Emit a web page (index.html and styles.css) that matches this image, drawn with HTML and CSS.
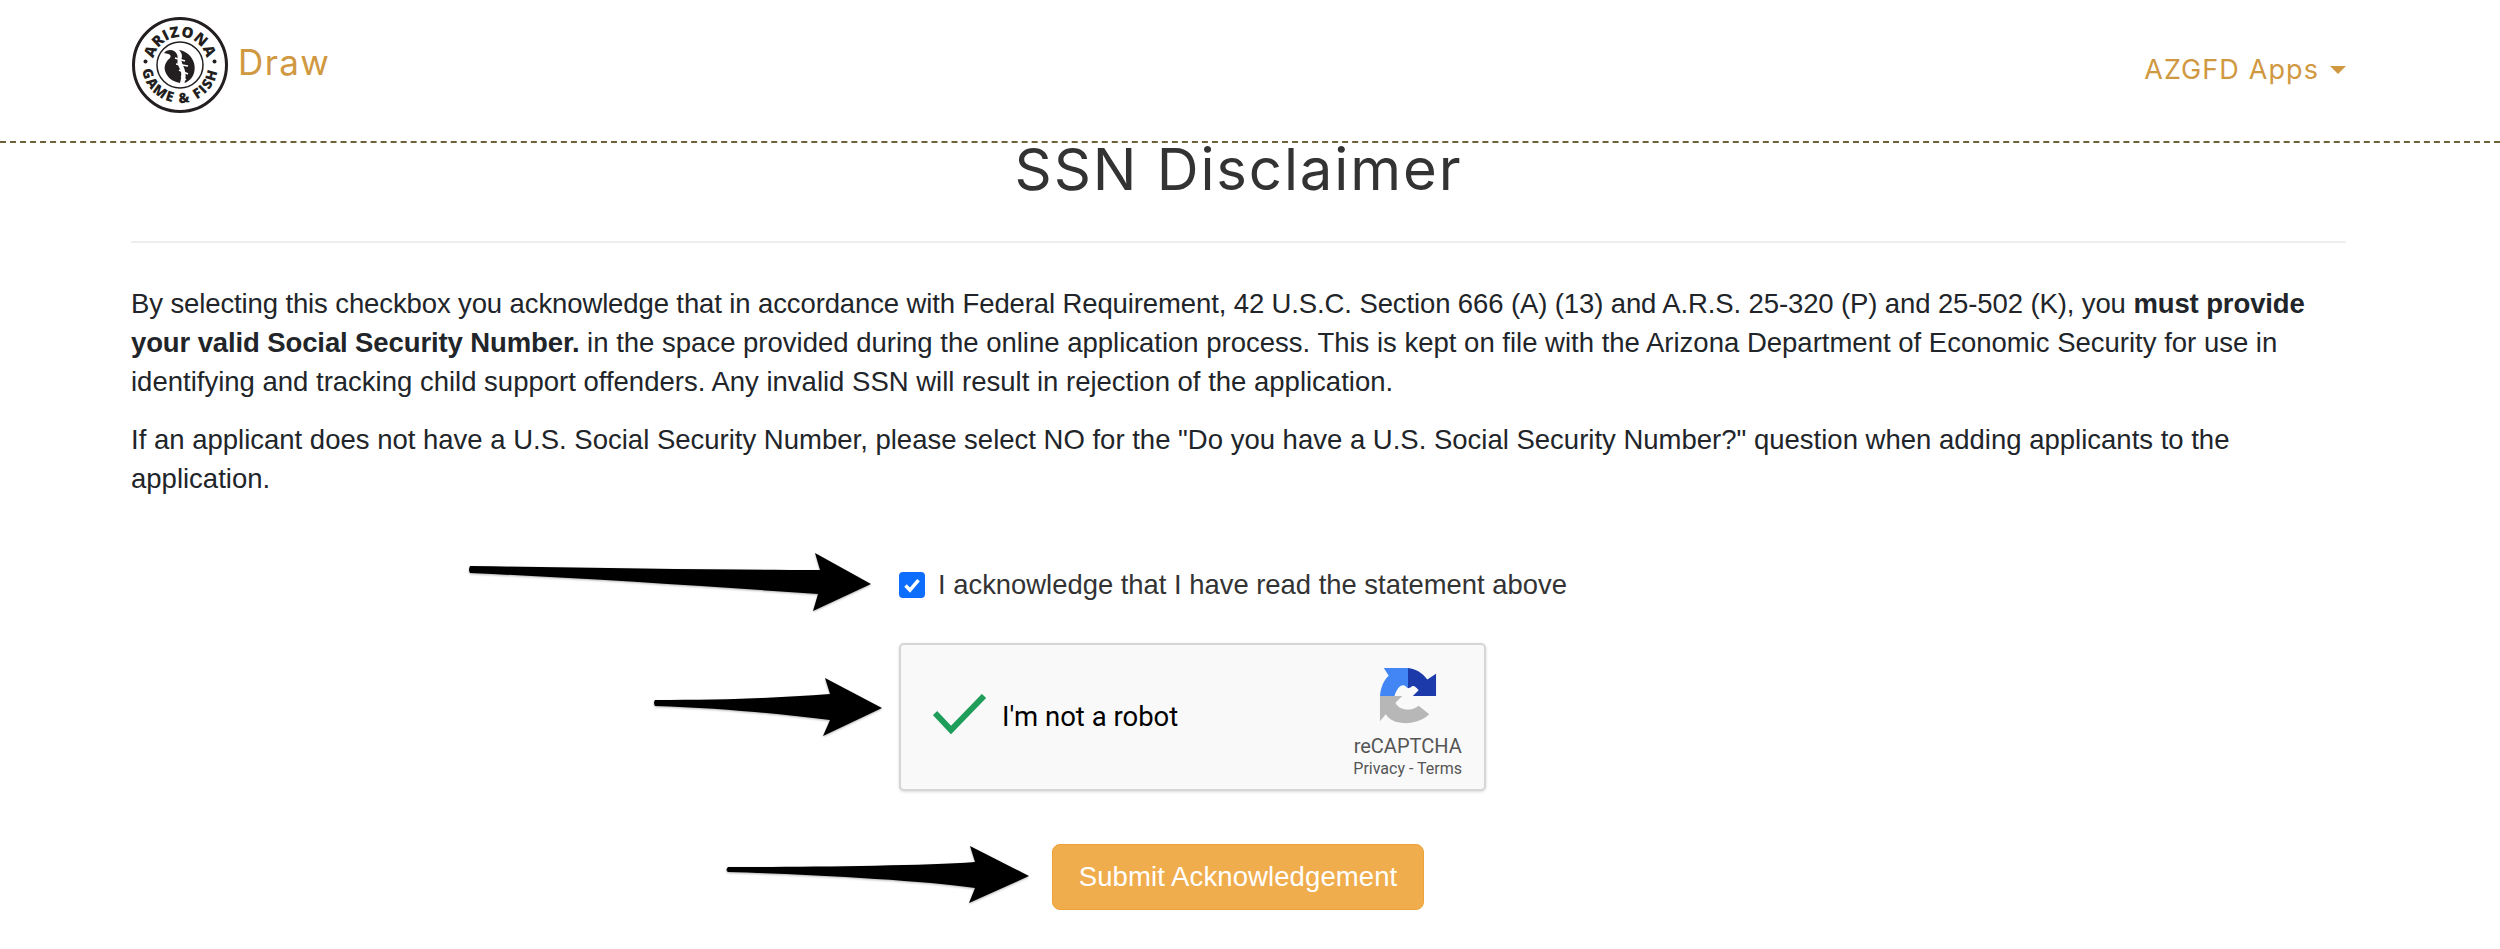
FILE: index.html
```html
<!DOCTYPE html>
<html lang="en">
<head>
<meta charset="utf-8">
<title>SSN Disclaimer</title>
<link rel="stylesheet" href="styles.css">
</head>
<body>
<header class="site-header">
  <a class="brand" href="#">
    <svg class="logo" viewBox="0 0 96 96" aria-label="Arizona Game and Fish">
      <defs>
        <path id="arc-top" d="M27.300 64.300 A27 27 0 1 1 68.700 64.300"/>
        <path id="arc-bottom" d="M15.100 29 A38 38 0 1 0 80.900 29"/>
      </defs>
      <circle cx="48" cy="48" r="46.500" class="logo-ring"/>
      <text class="logo-text"><textPath href="#arc-top" startOffset="50%" text-anchor="middle">ARIZONA</textPath></text>
      <text class="logo-text logo-text-small"><textPath href="#arc-bottom" startOffset="50%" text-anchor="middle">GAME &amp; FISH</textPath></text>
      <circle cx="13.500" cy="44.500" r="2"/>
      <circle cx="82.500" cy="44.500" r="2"/>
      <circle cx="48" cy="48" r="23" class="logo-inner"/>
      <path d="M32 36c2-3 7-4 10-2 4 2.500 4 7 3.500 10-.5 3 1 5 2.500 8 2 4.500 1.500 9 0 14-5-1-10-3-13-8-3-5-3-9-.5-13 1-2 3.500-3.500 4-5 .5-1.500-.5-2.500-2-3-1.500-.5-3-.5-4.500-1z"/>
      <path d="M47 33c7 1 13 6 15 13 1.500 6 .5 11-2.500 15-2 2.500-4.500 4-7 5 1.500-5 1.500-9 0-14-1-3-2.500-5-3-8-.5-2 .5-3 .5-5 0-2.500-1.500-4.500-3-6z"/>
      <path class="logo-feather" d="M43 41l10 3M44 47l12 2M47 53l9 4M49 59l5 4"/>
    </svg>
    <span class="brand-name">Draw</span>
  </a>
  <a class="apps-menu" href="#">AZGFD Apps<span class="caret"></span></a>
</header>

<main class="content">
  <h1 class="page-title">SSN Disclaimer</h1>
  <p class="copy"><span class="tight">By selecting this checkbox you acknowledge that in accordance with Federal Requirement, 42 U.S.C. Section 666 (A) (13) and A.R.S. 25-320 (P) and 25-502 (K), you</span> <strong class="tight">must provide your valid Social Security Number.</strong> in the space provided during the online application process. This is kept on file with the Arizona Department of Economic Security for use in identifying and tracking child support offenders. Any invalid SSN will result in rejection of the application.</p>
  <p class="copy">If an applicant does not have a U.S. Social Security Number, please select NO for the "Do you have a U.S. Social Security Number?" question when adding applicants to the application.</p>

  <form class="ack-form">
    <label class="ack-row">
      <span class="check-box">
        <svg viewBox="0 0 26 26"><path d="M6.500 13.500l4.500 4.700 8.500-10"/></svg>
      </span>
      I acknowledge that I have read the statement above
    </label>

    <div class="captcha">
      <svg class="captcha-check" viewBox="0 0 54 40"><path d="M2 19l16 17L51 2"/></svg>
      <span class="captcha-label">I'm not a robot</span>
      <div class="captcha-brand">
        <svg class="captcha-logo" viewBox="0 0 60 60">
          <path fill="#4285f4" d="M1 30C2 20 5 14 10 9L5 1H30V22L26 19C22 18 18 23 16 30Z"/>
          <path fill="#1c3aa9" d="M30 1C38 2 45 6 50 13L59 7V30H35L41 24C38 20 35 18 33 21L30 22Z"/>
          <path fill="#b7b7b7" d="M1 30H24L17 37C20 44 32 47 41 40L52 49C44 57 30 60 18 57 12 55 9 52 7 49L1 56Z"/>
        </svg>
        <span class="captcha-name">reCAPTCHA</span>
        <span class="captcha-links">Privacy - Terms</span>
      </div>
    </div>

    <button class="submit-btn" type="button">Submit Acknowledgement</button>
  </form>
</main>

<svg class="annotations" viewBox="0 0 2500 949" aria-hidden="true">
  <path d="M470 566 C600 568 720 570 820 570 L815 553 L871 584 L813 611 L818 594 C700 586 580 578 470 573 Q468 570 470 566Z"/>
  <path d="M655 700 C720 700 780 698 830 694 L825 678 L882 708 L823 736 L830 720 C780 714 720 708 655 706 Q653 703 655 700Z"/>
  <path d="M728 867 C800 867 920 866 975 862 L970 846 L1029 876 L969 903 L975 888 C920 880 800 874 728 872 Q725 870 728 867Z"/>
</svg>
</body>
</html>
```
FILE: styles.css
```css
* { box-sizing: border-box; }

html, body { margin: 0; padding: 0; }

body {
  position: relative;
  height: 949px;
  overflow: hidden;
  background: #fff;
  color: #333;
  font-family: "Liberation Sans", Arial, sans-serif;
  font-size: 27.500px;
  line-height: 39px;
}

.site-header {
  display: flex;
  justify-content: space-between;
  height: 143px;
  padding: 17px 154px 0 132px;
  border-bottom: 2px dashed #6f6238;
}

.brand {
  display: flex;
  align-items: flex-start;
  gap: 10px;
  text-decoration: none;
}

.logo { width: 96px; height: 96px; fill: #231f20; }
.logo-ring { fill: #fff; stroke: #231f20; stroke-width: 3; }
.logo-inner { fill: none; stroke: #231f20; stroke-width: 1.500; }
.logo-feather { fill: none; stroke: #fff; stroke-width: 1.500; }

.logo-text {
  font-family: "Open Sans", sans-serif;
  font-size: 15px;
  font-weight: 800;
  letter-spacing: .4px;
}

.logo-text-small { font-size: 14px; letter-spacing: 1.600px; }

.brand-name {
  margin-top: 24px;
  color: #d09840;
  font-family: Inter, sans-serif;
  font-size: 35px;
  line-height: 42px;
  letter-spacing: 1.400px;
}

.apps-menu {
  display: flex;
  align-items: center;
  height: 34px;
  margin-top: 36px;
  color: #d09840;
  font-family: Inter, sans-serif;
  font-size: 27px;
  line-height: 34px;
  letter-spacing: 1.100px;
  text-decoration: none;
}

.caret {
  width: 0;
  height: 0;
  margin-left: 11px;
  border-top: 8px solid #d09840;
  border-left: 8px solid transparent;
  border-right: 8px solid transparent;
}

.content { padding: 0 154px 0 131px; }

.page-title {
  height: 100px;
  margin: 0 0 41px;
  border-bottom: 2px solid #eee;
  color: #333;
  font-family: Inter, sans-serif;
  font-size: 58px;
  font-weight: 400;
  line-height: 52px;
  letter-spacing: 1.900px;
  text-align: center;
}

.copy { margin: 0 0 19px; color: #212529; }
.tight { letter-spacing: -.115px; }

.ack-form {
  display: flex;
  flex-direction: column;
  align-items: flex-start;
  margin-top: 67px;
  padding-left: 768px;
}

.ack-row {
  display: flex;
  align-items: center;
  gap: 13px;
  height: 39px;
  font-size: 27.400px;
}

.check-box {
  display: block;
  width: 26px;
  height: 26px;
  background: #0d6efd;
  border-radius: 4px;
}

.check-box svg { display: block; fill: none; stroke: #fff; stroke-width: 3.500; }

.captcha {
  display: flex;
  align-items: center;
  width: 587px;
  height: 148px;
  margin-top: 39px;
  padding: 0 22px 0 32px;
  background: #f9f9f9;
  border: 2px solid #d6d6d6;
  border-radius: 5px;
  box-shadow: 0 1px 3px rgba(0, 0, 0, .15);
}

.captcha-check {
  width: 54px;
  height: 40px;
  margin-bottom: 6px;
  fill: none;
  stroke: #1e9e5a;
  stroke-width: 6;
}

.captcha-label {
  margin-left: 15px;
  color: #000;
  font-family: Roboto, sans-serif;
  font-size: 27.500px;
  line-height: 32px;
}

.captcha-brand {
  display: flex;
  flex-direction: column;
  align-items: center;
  align-self: flex-start;
  margin-left: auto;
  padding-top: 22px;
  color: #555;
  font-family: Roboto, sans-serif;
}

.captcha-logo { width: 58px; height: 58px; margin-bottom: 9px; }
.captcha-name { font-size: 20px; line-height: 24px; }
.captcha-links { font-size: 16px; line-height: 22px; }

.submit-btn {
  width: 372px;
  height: 66px;
  margin: 53px 0 0 153px;
  padding: 0;
  background: #f0ad4e;
  border: 1px solid #eea236;
  border-radius: 8px;
  color: #fff;
  font-family: "Liberation Sans", Arial, sans-serif;
  font-size: 27.500px;
  letter-spacing: .1px;
  white-space: nowrap;
}

.annotations {
  position: absolute;
  top: 0;
  left: 0;
  width: 2500px;
  height: 949px;
  pointer-events: none;
  filter: drop-shadow(0 1px 1px rgba(0, 0, 0, .3));
}
```
